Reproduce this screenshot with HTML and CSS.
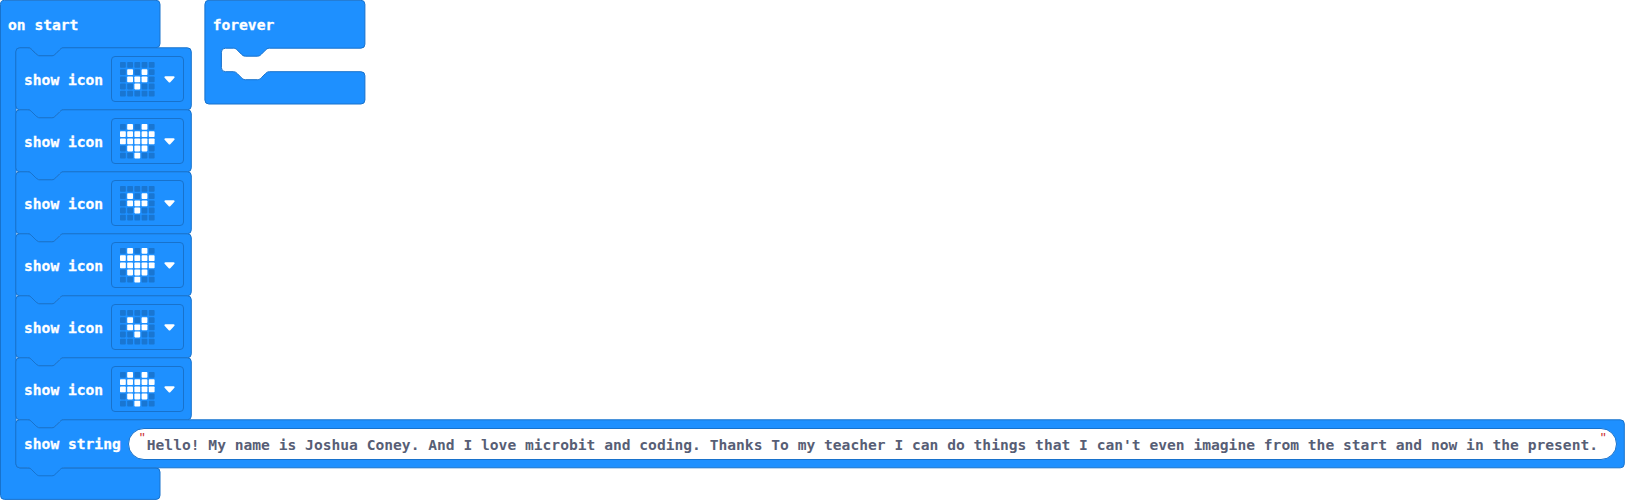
FILE: index.html
```
<!DOCTYPE html>
<html lang="en">
<head>
<meta charset="utf-8">
<title>Blocks</title>
<link rel="stylesheet" href="styles.css">
</head>
<body>
<main class="workspace">
  <section class="event start">
    <svg class="shape" width="161" height="500"><path d="M4.500 .3H156a4 4 0 0 1 4 4V43.700a4 4 0 0 1-4 4H64c-2 0-3 1-4 2l-4 4c-1 1-2 2-4 2H40c-2 0-3-1-4-2l-4-4c-1-1-2-2-4-2H20a4 4 0 0 0-4 4V464a4 4 0 0 0 4 4H156a4 4 0 0 1 4 4V495.400a4 4 0 0 1-4 4H4.500a4 4 0 0 1-4-4V4.300a4 4 0 0 1 4-4Z"/></svg>
    <h2 class="label title">on start</h2>
    <div class="stack" id="stack"></div>
  </section>
  <section class="event forever">
    <svg class="shape" width="162" height="105"><path d="M4.900 .3H156.900a4 4 0 0 1 4 4V44.200a4 4 0 0 1-4 4H65.400c-2 0-3 1-4 2l-4 4c-1 1-2 2-4 2H41.400c-2 0-3-1-4-2l-4-4c-1-1-2-2-4-2H21.400a4 4 0 0 0-4 4V67.700a4 4 0 0 0 4 4H29.400c2 0 3 1 4 2l4 4c1 1 2 2 4 2H53.400c2 0 3-1 4-2l4-4c1-1 2-2 4-2H156.900a4 4 0 0 1 4 4V100a4 4 0 0 1-4 4H4.900a4 4 0 0 1-4-4V4.300a4 4 0 0 1 4-4Z"/></svg>
    <h2 class="label title">forever</h2>
  </section>
</main>
<script src="blocks.js"></script>
</body>
</html>
```
FILE: styles.css
```
body { margin: 0; background: #fff; }
.workspace {
  display: flex;
  align-items: flex-start;
  gap: 44px;
  width: 1625px;
  height: 500px;
  overflow: hidden;
  font-family: "DejaVu Sans Mono", "Liberation Mono", monospace;
  font-size: 14.620px;
  font-weight: 700;
}
.event { position: relative; flex: none; width: 160px; }
.start { height: 500px; }
.forever { height: 105px; }
.shape { position: absolute; left: 0; top: 0; overflow: visible; }
.shape path { fill: #1e90ff; stroke: #1872cc; stroke-width: 1; }
.label {
  position: relative;
  margin: 0;
  color: #fff;
  font-size: inherit;
  line-height: 18px;
  white-space: pre;
  -webkit-text-stroke: .3px #fff;
}
.title { padding: 16px 0 13px 8px; }
.forever .title { padding-left: 8.700px; }
.stack { display: flex; flex-direction: column; align-items: flex-start; padding-left: 15px; }
.block { position: relative; display: flex; align-items: center; box-sizing: border-box; padding-left: 9px; }
.icon-block { width: 176px; height: 62px; padding-top: 2px; }
.icon-block .label { padding-top: 1px; }
.string-block { width: 1610px; height: 49px; padding-top: 1px; }
.block .shape path { transform: translate(.3px, .3px); }
.picker {
  position: relative;
  display: flex;
  align-items: center;
  gap: 9px;
  box-sizing: border-box;
  width: 73px;
  height: 46px;
  margin-left: 8px;
  padding: 0 0 0 8px;
  border: 1px solid #1872cc;
  border-radius: 4px;
}
.leds { width: 35px; height: 35px; fill: #1976d2; }
.leds .on { fill: #fff; }
.arrow { width: 11px; height: 7px; fill: #fff; }
.field {
  position: relative;
  display: flex;
  box-sizing: border-box;
  width: 1489px;
  height: 32px;
  margin-left: 7px;
  padding: 0 8px 0 11px;
  border: 1px solid #1872cc;
  border-radius: 16px;
  background: #fff;
  color: #575e75;
  line-height: 31px;
  white-space: pre;
}
.quote {
  flex: none;
  width: 7px;
  color: #cc3333;
  font-family: "Liberation Sans", sans-serif;
  font-size: 14px;
  font-weight: 400;
  line-height: 19px;
}
.value { flex: 1; }
```
FILE: blocks.js
```
const small = ["00000", "01010", "01110", "00100", "00000"];
const heart = ["01010", "11111", "11111", "01110", "00100"];
const notch = "c2 0 3 1 4 2l4 4c1 1 2 2 4 2h12c2 0 3-1 4-2l4-4c1-1 2-2 4-2";
const notchBack = "c-2 0-3 1-4 2l-4 4c-1 1-2 2-4 2h-12c-2 0-3-1-4-2l-4-4c-1-1-2-2-4-2";

function shape(w, h) {
  return `<svg class="shape" width="${w}" height="${h}"><path d="M4.500 .5H12.500${notch}H${w - 4.5}a4 4 0 0 1 4 4V${h - 3.5}a4 4 0 0 1-4 4H48.500${notchBack}H4.500a4 4 0 0 1-4-4V4.500a4 4 0 0 1 4-4Z"/></svg>`;
}

function iconBlock(rows) {
  const leds = rows.map((row, y) => row.split("").map((v, x) =>
    `<rect${v === "1" ? ' class="on"' : ""} x="${(x * 7.2).toFixed(1)}" y="${(y * 7.2).toFixed(1)}" width="5.800" height="5.800" rx=".8"/>`).join("")).join("");
  return `<div class="block icon-block">${shape(176.5, 62)}<span class="label">show icon</span><div class="picker"><svg class="leds" viewBox="0 0 35 35">${leds}</svg><svg class="arrow" viewBox="0 0 11 7"><path d="M1.500 .3H9.500Q11.200 .7 10.200 2L6.500 6Q5.500 7 4.500 6L.8 2Q-.2 .7 1.500 .3Z"/></svg></div></div>`;
}

const message = "Hello! My name is Joshua Coney. And I love microbit and coding. Thanks To my teacher I can do things that I can't even imagine from the start and now in the present.";
document.getElementById("stack").innerHTML =
  [small, heart, small, heart, small, heart].map(iconBlock).join("") +
  `<div class="block string-block">${shape(1609.5, 48)}<span class="label">show string</span><div class="field"><span class="quote">"</span><span class="value">${message}</span><span class="quote">"</span></div></div>`;
```
